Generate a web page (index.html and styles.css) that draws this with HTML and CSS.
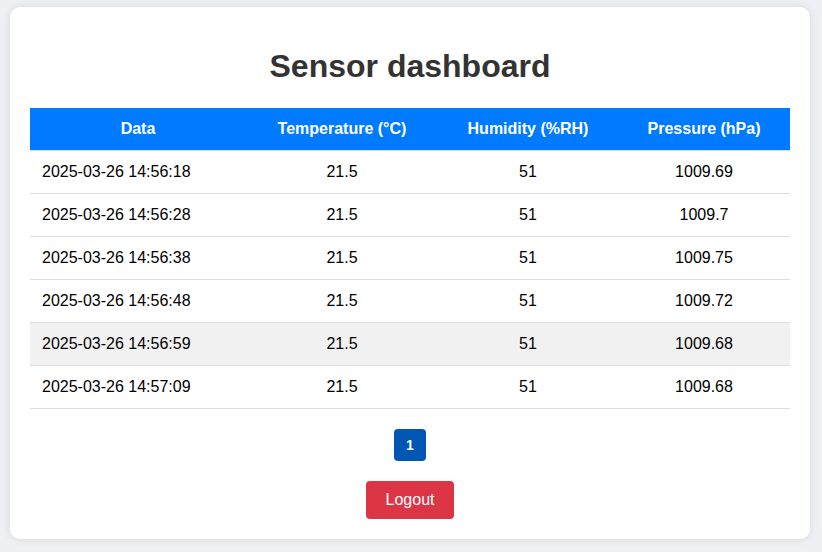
FILE: index.html
```html
<!DOCTYPE html>
<html lang="en">
<head>
<meta charset="utf-8">
<title>Sensor dashboard</title>
<link rel="stylesheet" href="styles.css">
</head>
<body>
<div class="card">
  <h1 class="title">Sensor dashboard</h1>
  <table class="data-table">
    <thead>
      <tr><th>Data</th><th>Temperature (°C)</th><th>Humidity (%RH)</th><th>Pressure (hPa)</th></tr>
    </thead>
    <tbody>
      <tr><td>2025-03-26 14:56:18</td><td>21.5</td><td>51</td><td>1009.69</td></tr>
      <tr><td>2025-03-26 14:56:28</td><td>21.5</td><td>51</td><td>1009.7</td></tr>
      <tr><td>2025-03-26 14:56:38</td><td>21.5</td><td>51</td><td>1009.75</td></tr>
      <tr><td>2025-03-26 14:56:48</td><td>21.5</td><td>51</td><td>1009.72</td></tr>
      <tr class="hover"><td>2025-03-26 14:56:59</td><td>21.5</td><td>51</td><td>1009.68</td></tr>
      <tr><td>2025-03-26 14:57:09</td><td>21.5</td><td>51</td><td>1009.68</td></tr>
    </tbody>
  </table>
  <div class="pagination"><button class="page-btn">1</button></div>
  <div class="actions"><button class="logout-btn">Logout</button></div>
</div>
</body>
</html>
```
FILE: styles.css
```css
html, body {
  margin: 0;
  padding: 0;
}
body {
  background: #eef0f4;
  font-family: "Liberation Sans", Arial, sans-serif;
  padding: 7px 12px 12px 10px;
}
.card {
  background: #fff;
  border-radius: 10px;
  box-shadow: 0 0 10px rgba(0, 0, 0, 0.1);
  padding: 20px;
  width: 760px;
}
.title {
  text-align: center;
  color: #333;
  font-size: 32px;
  font-weight: bold;
  margin: 21px 0 23px;
  line-height: 37px;
}
.data-table {
  width: 100%;
  border-collapse: collapse;
  font-size: 16px;
}
.data-table th,
.data-table td {
  padding: 12px;
  line-height: 18px;
  border-bottom: 1px solid #ddd;
  text-align: center;
}
.data-table th {
  background: #007bff;
  color: #fff;
  font-weight: bold;
}
.data-table th:nth-child(1) { width: 192px; }
.data-table th:nth-child(2) { width: 168px; }
.data-table th:nth-child(3) { width: 156px; }
.data-table td {
  color: #000;
}
.data-table td:first-child {
  text-align: left;
}
.data-table tr.hover td {
  background: #f1f1f1;
}
.pagination {
  display: flex;
  justify-content: center;
  margin-top: 20px;
}
.page-btn {
  width: 32px;
  height: 32px;
  border: none;
  border-radius: 4px;
  background: #0056b3;
  color: #fff;
  font-family: "Liberation Sans", Arial, sans-serif;
  font-size: 14px;
  font-weight: bold;
  padding: 0;
}
.actions {
  display: flex;
  justify-content: center;
  margin-top: 20px;
}
.logout-btn {
  width: 88px;
  height: 38px;
  border: none;
  border-radius: 4px;
  background: #dc3545;
  color: #fff;
  font-family: "Liberation Sans", Arial, sans-serif;
  font-size: 16px;
  padding: 0;
}
```
